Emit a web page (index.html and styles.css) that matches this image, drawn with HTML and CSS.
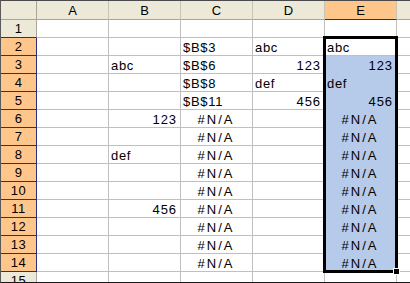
FILE: index.html
```html
<!DOCTYPE html>
<html>
<head>
<meta charset="utf-8">
<link rel="stylesheet" href="styles.css">
</head>
<body>
<div class="frame">
  <div class="sheet">
    <div class="c hd corner"></div><div class="c hd">A</div><div class="c hd">B</div><div class="c hd">C</div><div class="c hd">D</div><div class="c hd selc">E</div><div class="c hd"></div>

    <div class="c rh row1">1</div><div class="c"></div><div class="c"></div><div class="c"></div><div class="c"></div><div class="c"></div><div class="c"></div>

    <div class="c rh sel">2</div><div class="c"></div><div class="c"></div><div class="c">$B$3</div><div class="c">abc</div><div class="c act">abc</div><div class="c"></div>

    <div class="c rh sel">3</div><div class="c"></div><div class="c">abc</div><div class="c">$B$6</div><div class="c r">123</div><div class="c blue r">123</div><div class="c"></div>

    <div class="c rh sel">4</div><div class="c"></div><div class="c"></div><div class="c">$B$8</div><div class="c">def</div><div class="c blue">def</div><div class="c"></div>

    <div class="c rh sel">5</div><div class="c"></div><div class="c"></div><div class="c">$B$11</div><div class="c r">456</div><div class="c blue r">456</div><div class="c"></div>

    <div class="c rh sel">6</div><div class="c"></div><div class="c r">123</div><div class="c m">#N/A</div><div class="c"></div><div class="c blue m">#N/A</div><div class="c"></div>

    <div class="c rh sel">7</div><div class="c"></div><div class="c"></div><div class="c m">#N/A</div><div class="c"></div><div class="c blue m">#N/A</div><div class="c"></div>

    <div class="c rh sel">8</div><div class="c"></div><div class="c">def</div><div class="c m">#N/A</div><div class="c"></div><div class="c blue m">#N/A</div><div class="c"></div>

    <div class="c rh sel">9</div><div class="c"></div><div class="c"></div><div class="c m">#N/A</div><div class="c"></div><div class="c blue m">#N/A</div><div class="c"></div>

    <div class="c rh sel">10</div><div class="c"></div><div class="c"></div><div class="c m">#N/A</div><div class="c"></div><div class="c blue m">#N/A</div><div class="c"></div>

    <div class="c rh sel">11</div><div class="c"></div><div class="c r">456</div><div class="c m">#N/A</div><div class="c"></div><div class="c blue m">#N/A</div><div class="c"></div>

    <div class="c rh sel">12</div><div class="c"></div><div class="c"></div><div class="c m">#N/A</div><div class="c"></div><div class="c blue m">#N/A</div><div class="c"></div>

    <div class="c rh sel">13</div><div class="c"></div><div class="c"></div><div class="c m">#N/A</div><div class="c"></div><div class="c blue m">#N/A</div><div class="c"></div>

    <div class="c rh sel">14</div><div class="c"></div><div class="c"></div><div class="c m">#N/A</div><div class="c"></div><div class="c blue m">#N/A</div><div class="c"></div>

    <div class="c rh">15</div><div class="c"></div><div class="c"></div><div class="c"></div><div class="c"></div><div class="c"></div><div class="c"></div>
  </div>
  <div class="selbox"></div>
  <div class="handle"></div>
</div>
</body>
</html>
```

FILE: styles.css
```css
html, body {
  margin: 0;
  padding: 0;
  background: #ffffff;
}

.frame {
  position: relative;
  width: 410px;
  height: 283px;
  box-sizing: border-box;
  border-top: 1px solid #4a4a4a;
  border-left: 1px solid #5a5a5a;
  border-bottom: 1px solid #1a1a1a;
  overflow: hidden;
  font-family: "Liberation Sans", Arial, sans-serif;
  font-size: 13px;
  color: #000;
}

.sheet {
  display: grid;
  grid-template-columns: 36px repeat(6, 72px);
  grid-template-rows: 19px;
  grid-auto-rows: 18px;
  width: 468px;
}

.c {
  box-sizing: border-box;
  border-right: 1px solid #c0c0c0;
  border-bottom: 1px solid #c0c0c0;
  padding: 2px 3px 0 2px;
  line-height: 15px;
  white-space: nowrap;
  overflow: hidden;
  letter-spacing: 0.7px;
}

.r { text-align: right; letter-spacing: 0.9px; }
.m { text-align: center; letter-spacing: 2px; }

.hd {
  background: #ece9d8;
  text-align: center;
  padding: 2px 0 0 0;
  border-right: 1px solid #c7c5b2;
  border-bottom: 1px solid #a8a796;
  letter-spacing: 0;
}

.corner {
  border-right: 1px solid #a8a796;
}

.selc {
  background: #ffc68c;
  border-bottom: 1px solid #2c2c80;
  border-right: 1px solid #c7c5b2;
}

.rh {
  background: #ece9d8;
  text-align: center;
  padding: 1px 0 0 0;
  border-right: 1px solid #a8a796;
  border-bottom: 1px solid #c7c5b2;
  letter-spacing: 0.5px;
}

.row1 {
  border-bottom: 1px solid #2c2c80;
}

.rh.sel {
  background: #ffc68c;
  border-right: 1px solid #2c2c80;
  border-bottom: 1px solid #2c2c80;
}

.blue {
  background: #b6cbea;
  border-bottom-color: #b6cbea;
}

.act {
  background: #ffffff;
}

.selbox {
  position: absolute;
  left: 322px;
  top: 35px;
  width: 75px;
  height: 237px;
  box-sizing: border-box;
  border: 3px solid #000;
}

.handle {
  position: absolute;
  left: 392px;
  top: 267px;
  width: 7px;
  height: 7px;
  box-sizing: border-box;
  background: #000;
  border: 1px solid #fff;
}
```
